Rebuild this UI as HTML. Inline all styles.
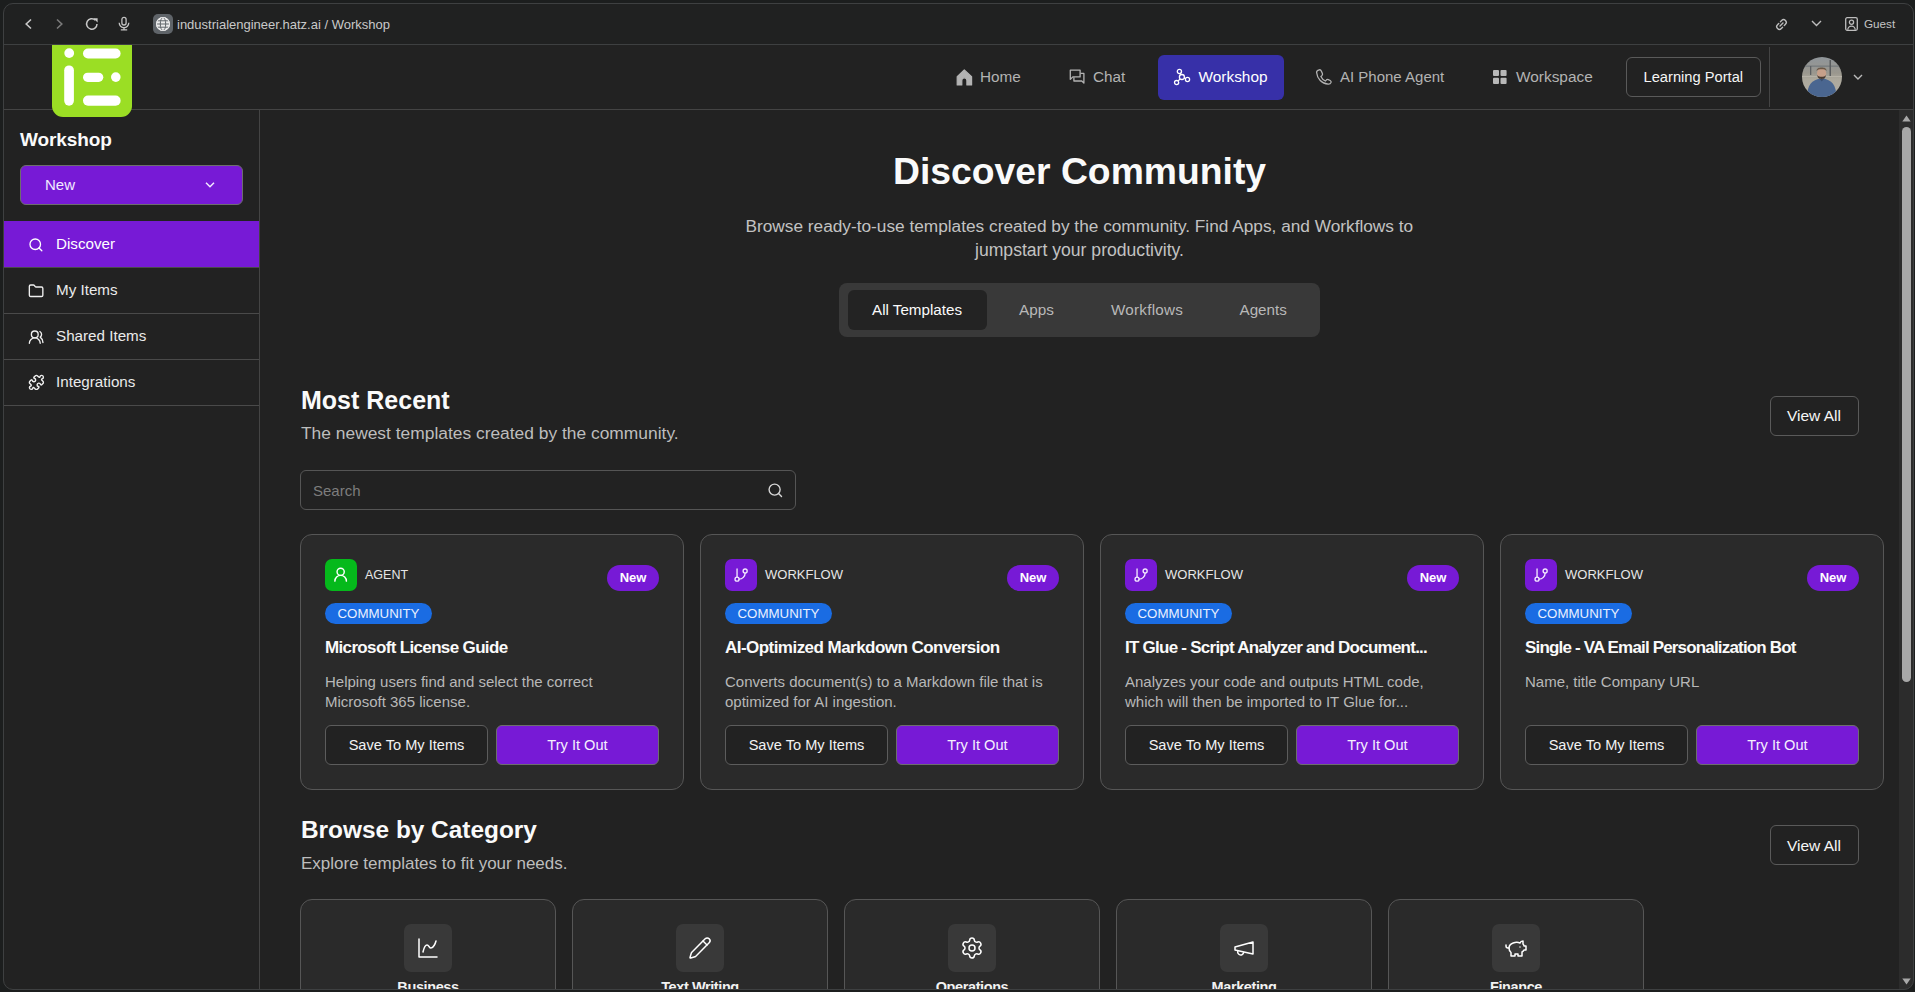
<!DOCTYPE html>
<html><head><meta charset="utf-8">
<style>
*{box-sizing:border-box;margin:0;padding:0}
html,body{width:1915px;height:992px;overflow:hidden;background:#222222;font-family:"Liberation Sans",sans-serif;position:relative}
.a{position:absolute}
.t{position:absolute;line-height:1;white-space:nowrap}
svg{position:absolute;overflow:visible}
#frame{position:absolute;left:3px;top:3px;width:1911px;height:987px;border:1px solid #3e4041;border-radius:10px;box-shadow:0 0 0 30px #1c1e1e;z-index:50;pointer-events:none}
.hl{position:absolute;height:1px;background:#444}
.nav{color:#b3b3b3;font-size:15.3px;margin-top:0.25px}
.sb{color:#eaeaea;font-size:15.2px}
.card{position:absolute;top:534px;width:384px;height:256px;border:1px solid #565656;border-radius:12px;background:#2a2a2a}
.ic{position:absolute;left:24px;top:24px;width:32px;height:32px;border-radius:7px;background:#771ad6}
.typ{position:absolute;left:64px;top:33.3px;font-size:13px;color:#e6e6e6;line-height:1;white-space:nowrap}
.new{position:absolute;left:306px;top:30px;width:52px;height:26px;border-radius:13px;background:#771ad6;color:#fff;font-weight:700;font-size:13px;line-height:26px;text-align:center}
.com{position:absolute;left:24px;top:68px;width:107px;height:21px;border-radius:11px;background:#1a6ce3;color:#e9f0ff;font-size:13.3px;line-height:21px;text-align:center}
.ttl{position:absolute;left:24px;top:103.95px;font-size:17px;font-weight:700;color:#fafafa;letter-spacing:-0.65px;line-height:1;white-space:nowrap}
.dsc{position:absolute;left:24px;top:137px;font-size:15px;color:#b8b8b8;line-height:20px;width:340px}
.sv{position:absolute;left:24px;top:190px;width:163px;height:40px;border:1px solid #5c5c5c;border-radius:6px;background:#222;color:#f2f2f2;font-size:14.6px;line-height:38px;text-align:center}
.try{position:absolute;left:195px;top:190px;width:163px;height:40px;border:1px solid #6e6e6e;border-radius:6px;background:#771ad6;color:#f5f0ff;font-size:14.6px;line-height:38px;text-align:center}
.cat{position:absolute;top:899px;width:256px;height:120px;border:1px solid #565656;border-radius:12px;background:#2a2a2a}
.cbox{position:absolute;left:103px;top:24px;width:48px;height:48px;border-radius:7px;background:#393939}
.clab{position:absolute;left:0;width:254px;top:79.9px;text-align:center;font-size:14.5px;font-weight:700;color:#f2f2f2;line-height:1;letter-spacing:-0.4px}
</style></head><body>

<!-- ============ BROWSER CHROME ============ -->
<div class="a" style="left:0;top:0;width:1915px;height:44px;background:#202121"></div>
<div class="hl" style="left:0;top:44px;width:1915px;background:#3e4041"></div>

<!-- back -->
<svg style="left:24px;top:18px" width="9" height="12" viewBox="0 0 9 12"><path d="M7 1.5 L2.2 6 L7 10.5" fill="none" stroke="#c8c8c8" stroke-width="1.6"/></svg>
<!-- forward -->
<svg style="left:55px;top:18px" width="9" height="12" viewBox="0 0 9 12"><path d="M2 1.5 L6.8 6 L2 10.5" fill="none" stroke="#7a7a7a" stroke-width="1.6"/></svg>
<!-- reload -->
<svg style="left:85px;top:17px" width="14" height="14" viewBox="0 0 14 14"><path d="M12 7 A5.2 5.2 0 1 1 10.3 3.1" fill="none" stroke="#c8c8c8" stroke-width="1.5"/><path d="M8.2 1.2 L12.6 1.2 L12.6 5.6 Z" fill="#c8c8c8"/></svg>
<!-- mic -->
<svg style="left:118px;top:16px" width="12" height="16" viewBox="0 0 12 16"><rect x="3.9" y="1.4" width="4.2" height="7.6" rx="2.1" fill="none" stroke="#c4c4c4" stroke-width="1.3"/><path d="M1.2 6.8 A4.8 4.8 0 0 0 10.8 6.8" fill="none" stroke="#c4c4c4" stroke-width="1.3"/><path d="M6 11.6 V13.6 M2.8 13.9 H9.2" stroke="#c4c4c4" stroke-width="1.3"/></svg>
<!-- globe badge -->
<div class="a" style="left:153px;top:14px;width:20px;height:20px;border-radius:5px;background:#5f6469"></div>
<svg style="left:156px;top:17px" width="14" height="14" viewBox="0 0 14 14"><circle cx="7" cy="7" r="7" fill="#ececec"/><ellipse cx="7" cy="7" rx="2.7" ry="6.6" fill="none" stroke="#5f6469" stroke-width="1"/><path d="M0.5 7 H13.5 M1.5 3.8 H12.5 M1.5 10.2 H12.5" stroke="#5f6469" stroke-width="1"/><circle cx="7" cy="7" r="6.5" fill="none" stroke="#ececec" stroke-width="1"/></svg>
<div class="t" style="left:177px;top:17.9px;font-size:13px;color:#c9c9c9">industrialengineer.hatz.ai / Workshop</div>

<!-- right chrome icons -->
<svg style="left:1774.5px;top:17.5px" width="13" height="13" viewBox="0 0 13 13"><g transform="rotate(-45 6.5 6.5)" fill="none" stroke="#bdbdbd" stroke-width="1.4" stroke-linecap="round"><path d="M5.3 3.8 H3.6 A2.7 2.7 0 0 0 3.6 9.2 H5.3"/><path d="M7.7 3.8 H9.4 A2.7 2.7 0 0 1 9.4 9.2 H7.7"/><path d="M4.4 6.5 H8.6"/></g></svg>
<svg style="left:1811px;top:20px" width="11" height="7" viewBox="0 0 11 7"><path d="M1 1 L5.5 5.5 L10 1" fill="none" stroke="#bdbdbd" stroke-width="1.4"/></svg>
<svg style="left:1845px;top:17px" width="13" height="14" viewBox="0 0 13 14"><rect x="0.7" y="0.7" width="11.6" height="12.6" rx="1.5" fill="none" stroke="#bdbdbd" stroke-width="1.3"/><circle cx="6.5" cy="5.2" r="2.1" fill="none" stroke="#bdbdbd" stroke-width="1.3"/><path d="M2.8 12.8 A3.7 3.7 0 0 1 10.2 12.8" fill="none" stroke="#bdbdbd" stroke-width="1.3"/></svg>
<div class="t" style="left:1864px;top:18.15px;font-size:11.7px;color:#c4c4c4">Guest</div>

<!-- ============ APP HEADER ============ -->
<div class="hl" style="left:0;top:109px;width:1915px;background:#444"></div>

<!-- logo -->
<div class="a" style="left:52px;top:45px;width:80px;height:72px;background:#9bde24;border-radius:0 0 11px 11px;z-index:5"></div>
<svg style="left:52px;top:45px;z-index:6" width="80" height="72" viewBox="0 0 80 72">
  <circle cx="17.2" cy="8.1" r="4.9" fill="#fff"/>
  <rect x="31" y="3.5" width="37.6" height="9.9" rx="4.95" fill="#fff"/>
  <rect x="12.2" y="20.4" width="9.7" height="40.3" rx="4.85" fill="#fff"/>
  <rect x="31" y="27.7" width="20.3" height="9.2" rx="4.6" fill="#fff"/>
  <circle cx="63.8" cy="32.1" r="4.8" fill="#fff"/>
  <rect x="31" y="50.6" width="37.6" height="10.1" rx="5" fill="#fff"/>
</svg>

<!-- nav -->
<svg style="left:955.5px;top:68.5px" width="17" height="17" viewBox="0 0 17 17"><path d="M1.2 7.6 L8.3 0.9 L15.6 7.6 V16 H10.9 V11.4 A2.55 2.55 0 0 0 5.8 11.4 V16 H1.2 Z" fill="#b3b3b3" stroke="#b3b3b3" stroke-width="1.2" stroke-linejoin="round"/></svg>
<div class="t nav" style="left:980px;top:69px">Home</div>

<svg style="left:1069px;top:69px" width="16" height="15" viewBox="0 0 16 15"><path d="M1.3 10.4 V1.2 H11.1 V7.9 H3.8 Z" fill="none" stroke="#b3b3b3" stroke-width="1.3" stroke-linejoin="round"/><path d="M4.9 8.2 V12 H12.8 L14.9 14.1 V4.4 H11.4" fill="none" stroke="#b3b3b3" stroke-width="1.3" stroke-linejoin="round"/></svg>
<div class="t nav" style="left:1093px;top:69px">Chat</div>

<div class="a" style="left:1158px;top:55px;width:126px;height:45px;border-radius:6px;background:#3730a8"></div>
<svg style="left:1173px;top:68px" width="17" height="17" viewBox="0 0 17 17"><circle cx="6.4" cy="3.5" r="2.1" fill="none" stroke="#fff" stroke-width="1.3"/><circle cx="8.9" cy="9" r="2.5" fill="none" stroke="#fff" stroke-width="1.3"/><circle cx="14.5" cy="11.5" r="2.1" fill="none" stroke="#fff" stroke-width="1.3"/><circle cx="3.6" cy="14.6" r="2.1" fill="none" stroke="#fff" stroke-width="1.3"/><path d="M7.4 5.3 L7.9 6.8 M11.2 10 L12.6 10.7 M7 10.8 L5.1 13.1" stroke="#fff" stroke-width="1.3"/></svg>
<div class="t nav" style="left:1198.5px;top:69px;color:#fff;font-size:15.4px">Workshop</div>

<svg style="left:1316px;top:69.4px" width="16" height="16" viewBox="0 0 16 16"><path d="M3.2 0.8 C4.2 0.6 5 1.2 5.4 2.2 L6.4 4.6 C6.7 5.4 6.4 6.2 5.8 6.7 L4.9 7.4 C5.9 9.6 7.4 11 9.4 12 L10.2 11.1 C10.7 10.5 11.5 10.3 12.3 10.6 L14.2 11.5 C15 11.9 15.3 12.7 15 13.5 C14.5 14.7 13.4 15.3 12.2 15.2 C5.8 14.6 1.2 9.8 0.6 3.5 C0.5 2.2 1.8 1.1 3.2 0.8 Z" fill="none" stroke="#b3b3b3" stroke-width="1.3" stroke-linejoin="round"/></svg>
<div class="t nav" style="left:1340px;top:69px;font-size:15px">AI Phone Agent</div>

<svg style="left:1493.3px;top:70px" width="14" height="14" viewBox="0 0 14 14"><rect x="0" y="0" width="6" height="6.1" rx="1" fill="#b8b8b8"/><rect x="7.5" y="0" width="6.1" height="6.1" rx="1" fill="#b8b8b8"/><rect x="0" y="7.7" width="6" height="6.2" rx="1" fill="#b8b8b8"/><rect x="7.5" y="7.7" width="6.1" height="6.2" rx="1" fill="#b8b8b8"/></svg>
<div class="t nav" style="left:1516px;top:69px;font-size:15.4px">Workspace</div>

<div class="a" style="left:1626px;top:57px;width:135px;height:40px;border:1px solid #5a5a5a;border-radius:6px"></div>
<div class="t" style="left:1643.5px;top:69.65px;font-size:14.7px;color:#f5f5f5">Learning Portal</div>

<div class="a" style="left:1769px;top:47px;width:1px;height:60px;background:#444"></div>
<!-- avatar -->
<svg style="left:1802px;top:57px" width="40" height="40" viewBox="0 0 40 40">
  <defs><clipPath id="av"><circle cx="20" cy="20" r="20"/></clipPath>
  <linearGradient id="avbg" x1="0" y1="0" x2="0" y2="1"><stop offset="0" stop-color="#8f959a"/><stop offset="0.4" stop-color="#9a978e"/><stop offset="0.55" stop-color="#aca89c"/><stop offset="1" stop-color="#b3afa4"/></linearGradient></defs>
  <g clip-path="url(#av)">
    <rect width="40" height="40" fill="url(#avbg)"/>
    <rect x="0" y="8.5" width="40" height="1.3" fill="#767a7d"/>
    <rect x="8" y="9" width="1.3" height="9" fill="#5e6163"/>
    <rect x="27.5" y="3" width="1.5" height="16" fill="#5a5d5f"/>
    <rect x="0" y="19" width="40" height="1" fill="#b6b2a7"/>
    <path d="M5 40 C5.5 28 9 23 19.8 21.3 C30.5 23 34 28 34.5 40 Z" fill="#4a6690"/>
    <path d="M17 21.3 L19.8 24.5 L22.6 21.3 Z" fill="#3a4f70"/>
    <ellipse cx="19.6" cy="16.2" rx="4.6" ry="5.2" fill="#c7a08a"/>
    <path d="M14.6 14 C14.6 11.3 16.8 10.6 19.6 10.6 C22.4 10.6 24.6 11.3 24.6 14 C23.5 12.6 21.8 12.3 19.6 12.3 C17.4 12.3 15.7 12.6 14.6 14 Z" fill="#6b5847"/>
    <path d="M15.2 18 C15.6 21.2 17.5 21.9 19.6 21.9 C21.7 21.9 23.6 21.2 24 18 C22.9 19.5 21.4 19.8 19.6 19.8 C17.8 19.8 16.3 19.5 15.2 18 Z" fill="#4a3b31"/>
  </g>
</svg>
<svg style="left:1853px;top:74px" width="10" height="7" viewBox="0 0 10 7"><path d="M1 1 L5 5 L9 1" fill="none" stroke="#bbb" stroke-width="1.4"/></svg>

<!-- ============ SIDEBAR ============ -->
<div class="a" style="left:259px;top:110px;width:1px;height:882px;background:#444"></div>
<div class="t" style="left:20px;top:129.5px;font-size:19px;font-weight:700;color:#fafafa;letter-spacing:-0.1px">Workshop</div>
<div class="a" style="left:20px;top:165px;width:223px;height:40px;border:1px solid #6e6e6e;border-radius:6px;background:#771ad6"></div>
<div class="t" style="left:45px;top:177.35px;font-size:15px;color:#f2eaff">New</div>
<svg style="left:205px;top:182px" width="10" height="6" viewBox="0 0 10 6"><path d="M1 0.8 L5 4.8 L9 0.8" fill="none" stroke="#f2eaff" stroke-width="1.5"/></svg>

<div class="a" style="left:4px;top:221px;width:255px;height:46px;background:#771ad6"></div>
<div class="hl" style="left:4px;top:267px;width:255px;background:#4a4a4a"></div>
<div class="hl" style="left:4px;top:313px;width:255px;background:#4a4a4a"></div>
<div class="hl" style="left:4px;top:359px;width:255px;background:#4a4a4a"></div>
<div class="hl" style="left:4px;top:405px;width:255px;background:#4a4a4a"></div>

<svg style="left:27.8px;top:237px" width="15.8" height="15.8" viewBox="0 0 24 24" fill="none" stroke="#fff" stroke-width="2" stroke-linecap="round" stroke-linejoin="round"><circle cx="11" cy="11" r="8"/><path d="m21 21-4.3-4.3"/></svg>
<div class="t sb" style="left:56px;top:236.25px;color:#fff">Discover</div>

<svg style="left:27.8px;top:282.8px" width="16.2" height="16.2" viewBox="0 0 24 24" fill="none" stroke="#f0f0f0" stroke-width="2" stroke-linecap="round" stroke-linejoin="round"><path d="M20 20a2 2 0 0 0 2-2V8a2 2 0 0 0-2-2h-7.9a2 2 0 0 1-1.69-.9L9.6 3.9A2 2 0 0 0 7.93 3H4a2 2 0 0 0-2 2v13a2 2 0 0 0 2 2Z"/></svg>
<div class="t sb" style="left:56px;top:282.25px">My Items</div>

<svg style="left:27.9px;top:328.8px" width="16.3" height="16.3" viewBox="0 0 24 24" fill="none" stroke="#f0f0f0" stroke-width="2" stroke-linecap="round" stroke-linejoin="round"><path d="M18 21a8 8 0 0 0-16 0"/><circle cx="10" cy="8" r="5"/><path d="M22 20c0-3.37-2-6.5-4-8a5 5 0 0 0-.45-8.3"/></svg>
<div class="t sb" style="left:56px;top:328.25px">Shared Items</div>

<svg style="left:27.5px;top:373.6px" width="16.8" height="16.8" viewBox="0 0 24 24" fill="none" stroke="#f0f0f0" stroke-width="2" stroke-linecap="round" stroke-linejoin="round"><path d="M15.39 4.39a1 1 0 0 0 1.68-.474 2.5 2.5 0 1 1 3.014 3.015 1 1 0 0 0-.474 1.68l1.683 1.682a2.414 2.414 0 0 1 0 3.414L19.61 15.39a1 1 0 0 1-1.68-.474 2.5 2.5 0 1 0-3.014 3.015 1 1 0 0 1 .474 1.68l-1.683 1.682a2.414 2.414 0 0 1-3.414 0L8.61 19.61a1 1 0 0 0-1.68.474 2.5 2.5 0 1 1-3.014-3.015 1 1 0 0 0 .474-1.68l-1.683-1.682a2.414 2.414 0 0 1 0-3.414L4.39 8.61a1 1 0 0 1 1.68.474 2.5 2.5 0 1 0 3.014-3.015 1 1 0 0 1-.474-1.68l1.683-1.682a2.414 2.414 0 0 1 3.414 0z"/></svg>
<div class="t sb" style="left:56px;top:374.25px">Integrations</div>

<!-- ============ MAIN ============ -->
<div class="t" style="left:893px;top:152.85px;font-size:37.3px;font-weight:700;color:#fafafa">Discover Community</div>
<div class="t" style="left:745.5px;top:218.2px;font-size:17.25px;color:#c2c2c2">Browse ready-to-use templates created by the community. Find Apps, and Workflows to</div>
<div class="t" style="left:975px;top:242px;font-size:17.6px;color:#c2c2c2">jumpstart your productivity.</div>

<div class="a" style="left:839px;top:283px;width:481px;height:54px;border-radius:8px;background:#393939"></div>
<div class="a" style="left:848px;top:290px;width:139px;height:40px;border-radius:6px;background:#232323"></div>
<div class="t" style="left:872px;top:301.9px;font-size:15.2px;color:#fafafa">All Templates</div>
<div class="t" style="left:1019px;top:301.9px;font-size:15.3px;color:#b8b8b8">Apps</div>
<div class="t" style="left:1111px;top:301.9px;font-size:15.2px;letter-spacing:0.27px;color:#b8b8b8">Workflows</div>
<div class="t" style="left:1239.5px;top:301.9px;font-size:15.2px;color:#b8b8b8">Agents</div>

<div class="t" style="left:301px;top:388.2px;font-size:25px;font-weight:700;color:#fafafa">Most Recent</div>
<div class="t" style="left:301px;top:425px;font-size:17.4px;color:#bdbdbd">The newest templates created by the community.</div>

<div class="a" style="left:1770px;top:396px;width:89px;height:40px;border:1px solid #5a5a5a;border-radius:6px"></div>
<div class="t" style="left:1787px;top:408.25px;font-size:15.5px;color:#f5f5f5">View All</div>

<div class="a" style="left:300px;top:470px;width:496px;height:40px;border:1px solid #555;border-radius:6px"></div>
<div class="t" style="left:313px;top:482.5px;font-size:15px;color:#7d7d7d">Search</div>
<svg style="left:767px;top:482px" width="16.6" height="16.6" viewBox="0 0 24 24" fill="none" stroke="#d6d6d6" stroke-width="2" stroke-linecap="round" stroke-linejoin="round"><circle cx="11" cy="11" r="8"/><path d="m21 21-4.3-4.3"/></svg>

<!-- cards -->
<div class="card" style="left:300px">
  <div class="ic" style="background:#05b91b"><svg style="left:7.4px;top:7.3px" width="17.3" height="17.3" viewBox="0 0 24 24" fill="none" stroke="#fff" stroke-width="2" stroke-linecap="round" stroke-linejoin="round"><circle cx="12" cy="8" r="5"/><path d="M20 21a8 8 0 0 0-16 0"/></svg></div>
  
  <div class="typ" style="font-size:12.5px;top:33.6px">AGENT</div>
  <div class="new">New</div>
  <div class="com">COMMUNITY</div>
  <div class="ttl">Microsoft License Guide</div>
  <div class="dsc">Helping users find and select the correct<br>Microsoft 365 license.</div>
  <div class="sv">Save To My Items</div>
  <div class="try">Try It Out</div>
</div>

<div class="card" style="left:700px">
  <div class="ic"><svg style="left:7.9px;top:7.9px" width="16.2" height="16.2" viewBox="0 0 24 24" fill="none" stroke="#f3e8ff" stroke-width="2" stroke-linecap="round" stroke-linejoin="round"><line x1="6" x2="6" y1="3" y2="15"/><circle cx="18" cy="6" r="3"/><circle cx="6" cy="18" r="3"/><path d="M18 9a9 9 0 0 1-9 9"/></svg></div>
  
  <div class="typ">WORKFLOW</div>
  <div class="new">New</div>
  <div class="com">COMMUNITY</div>
  <div class="ttl" style="letter-spacing:-0.54px">AI-Optimized Markdown Conversion</div>
  <div class="dsc">Converts document(s) to a Markdown file that is optimized for AI ingestion.</div>
  <div class="sv">Save To My Items</div>
  <div class="try">Try It Out</div>
</div>

<div class="card" style="left:1100px">
  <div class="ic"><svg style="left:7.9px;top:7.9px" width="16.2" height="16.2" viewBox="0 0 24 24" fill="none" stroke="#f3e8ff" stroke-width="2" stroke-linecap="round" stroke-linejoin="round"><line x1="6" x2="6" y1="3" y2="15"/><circle cx="18" cy="6" r="3"/><circle cx="6" cy="18" r="3"/><path d="M18 9a9 9 0 0 1-9 9"/></svg></div>
  
  <div class="typ">WORKFLOW</div>
  <div class="new">New</div>
  <div class="com">COMMUNITY</div>
  <div class="ttl" style="letter-spacing:-0.75px">IT Glue - Script Analyzer and Document...</div>
  <div class="dsc">Analyzes your code and outputs HTML code, which will then be imported to IT Glue for...</div>
  <div class="sv">Save To My Items</div>
  <div class="try">Try It Out</div>
</div>

<div class="card" style="left:1500px">
  <div class="ic"><svg style="left:7.9px;top:7.9px" width="16.2" height="16.2" viewBox="0 0 24 24" fill="none" stroke="#f3e8ff" stroke-width="2" stroke-linecap="round" stroke-linejoin="round"><line x1="6" x2="6" y1="3" y2="15"/><circle cx="18" cy="6" r="3"/><circle cx="6" cy="18" r="3"/><path d="M18 9a9 9 0 0 1-9 9"/></svg></div>
  
  <div class="typ">WORKFLOW</div>
  <div class="new">New</div>
  <div class="com">COMMUNITY</div>
  <div class="ttl" style="letter-spacing:-0.83px">Single - VA Email Personalization Bot</div>
  <div class="dsc">Name, title Company URL</div>
  <div class="sv">Save To My Items</div>
  <div class="try">Try It Out</div>
</div>

<!-- browse by category -->
<div class="t" style="left:301px;top:817.8px;font-size:24.4px;font-weight:700;color:#fafafa">Browse by Category</div>
<div class="t" style="left:301px;top:855.1px;font-size:17px;color:#bdbdbd">Explore templates to fit your needs.</div>
<div class="a" style="left:1770px;top:825px;width:89px;height:40px;border:1px solid #5a5a5a;border-radius:6px"></div>
<div class="t" style="left:1787px;top:837.7px;font-size:15.5px;color:#f5f5f5">View All</div>

<div class="cat" style="left:300px"><div class="cbox"></div>
  <svg style="left:115px;top:36px" width="24" height="24" viewBox="0 0 24 24" fill="none" stroke="#fff" stroke-width="1.5" stroke-linecap="round" stroke-linejoin="round"><path d="M3 3v18h18"/><path d="M7 16c.5-2 1.5-7 4-7 2 0 2 3 4 3 2.5 0 4.5-5 5-7"/></svg>
  <div class="clab">Business</div></div>
<div class="cat" style="left:572px"><div class="cbox"></div>
  <svg style="left:115px;top:36px" width="24" height="24" viewBox="0 0 24 24" fill="none" stroke="#fff" stroke-width="1.5" stroke-linecap="round" stroke-linejoin="round"><path d="M21.174 6.812a1 1 0 0 0-3.986-3.987L3.842 16.174a2 2 0 0 0-.5.83l-1.321 4.352a.5.5 0 0 0 .623.622l4.353-1.32a2 2 0 0 0 .83-.497z"/><path d="m15 5 4 4"/></svg>
  <div class="clab">Text Writing</div></div>
<div class="cat" style="left:844px"><div class="cbox"></div>
  <svg style="left:115px;top:36px" width="24" height="24" viewBox="0 0 24 24" fill="none" stroke="#fff" stroke-width="1.5" stroke-linecap="round" stroke-linejoin="round"><path d="M9.671 4.136a2.34 2.34 0 0 1 4.659 0 2.34 2.34 0 0 0 3.319 1.915 2.34 2.34 0 0 1 2.33 4.033 2.34 2.34 0 0 0 0 3.831 2.34 2.34 0 0 1-2.33 4.033 2.34 2.34 0 0 0-3.319 1.915 2.34 2.34 0 0 1-4.659 0 2.34 2.34 0 0 0-3.32-1.915 2.34 2.34 0 0 1-2.33-4.033 2.34 2.34 0 0 0 0-3.831A2.34 2.34 0 0 1 6.35 6.051a2.34 2.34 0 0 0 3.319-1.915"/><circle cx="12" cy="12" r="3"/></svg>
  <div class="clab">Operations</div></div>
<div class="cat" style="left:1116px"><div class="cbox"></div>
  <svg style="left:115px;top:36px" width="24" height="24" viewBox="0 0 24 24" fill="none" stroke="#fff" stroke-width="1.5" stroke-linecap="round" stroke-linejoin="round"><path d="m3 11 18-5v12L3 14v-3z"/><path d="M11.6 16.8a3 3 0 1 1-5.8-1.6"/></svg>
  <div class="clab">Marketing</div></div>
<div class="cat" style="left:1388px"><div class="cbox"></div>
  <svg style="left:115px;top:36px" width="24" height="24" viewBox="0 0 24 24" fill="none" stroke="#fff" stroke-width="1.5" stroke-linecap="round" stroke-linejoin="round"><path d="M19 5c-1.5 0-2.8 1.4-3 2-3.5-1.5-11-.3-11 5 0 1.8 0 3 2 4.5V20h4v-2h3v2h4v-4c1-.5 1.7-1 2-2h2v-4h-2c0-1-.5-1.5-1-2V5z"/><path d="M2 9v1c0 1.1.9 2 2 2h1"/><path d="M16 11h.01"/></svg>
  <div class="clab">Finance</div></div>

<!-- scrollbar -->
<div class="a" style="left:1899px;top:110px;width:14px;height:880px;background:#2c2c2c"></div>
<svg style="left:1902px;top:115px" width="9" height="7" viewBox="0 0 9 7"><path d="M4.5 0.5 L8.7 6.5 H0.3 Z" fill="#a8a8a8"/></svg>
<div class="a" style="left:1902px;top:127px;width:9px;height:555px;border-radius:4.5px;background:#a8a8a8"></div>
<svg style="left:1902px;top:978px" width="9" height="7" viewBox="0 0 9 7"><path d="M0.3 0.5 H8.7 L4.5 6.5 Z" fill="#a8a8a8"/></svg>

<div id="frame"></div>
</body></html>
